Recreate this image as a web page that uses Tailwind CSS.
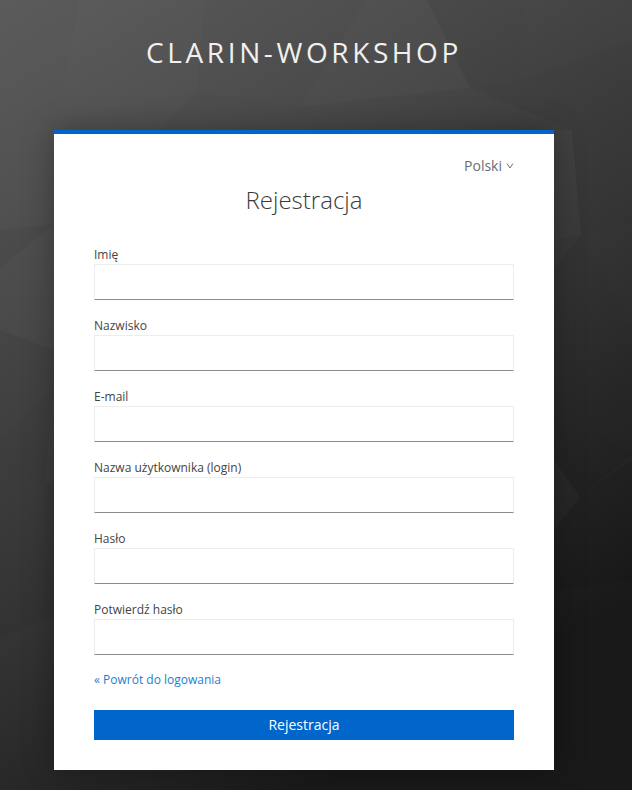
<!DOCTYPE html>
<html lang="pl">
<head>
  <meta charset="UTF-8">
  <meta name="viewport" content="width=device-width, initial-scale=1.0">
  <script src="https://cdn.jsdelivr.net/npm/@tailwindcss/browser@4"></script>
  <title>Rejestracja</title>
</head>
<body class="bg-[#2b2b2b] font-['Open_Sans',sans-serif]">
  <div class="relative w-[632px] h-[790px] overflow-hidden">
    <!-- polygon background -->
    <svg class="absolute inset-0" width="632" height="790" viewBox="0 0 632 790">
      <defs>
        <linearGradient id="bg" x1="0" y1="0" x2="0.5" y2="1">
          <stop offset="0" stop-color="#5a5a5a"/>
          <stop offset="0.3" stop-color="#4a4a4a"/>
          <stop offset="0.65" stop-color="#343434"/>
          <stop offset="1" stop-color="#191919"/>
        </linearGradient>
      </defs>
      <rect width="632" height="790" fill="url(#bg)"/>
      <polygon points="0,0 79,0 57,120 0,130" fill="#fff" fill-opacity="0.01"/>
      <polygon points="79,0 205,0 197,92 57,120" fill="#fff" fill-opacity="0.02"/>
      <polygon points="0,130 57,120 197,92 160,130 54,224 0,230" fill="#fff" fill-opacity="0.015"/>
      <polygon points="205,0 365,0 300,107 197,92" fill="#fff" fill-opacity="0.008"/>
      <polygon points="365,0 427,0 470,88 300,107" fill="#fff" fill-opacity="0.018"/>
      <polygon points="427,0 523,0 523,80 470,88" fill="#000" fill-opacity="0.02"/>
      <polygon points="523,0 632,0 632,40 523,80" fill="#000" fill-opacity="0.01"/>
      <polygon points="523,80 632,40 632,224 581,235 572,130 470,88" fill="#000" fill-opacity="0.04"/>
      <polygon points="554,130 572,130 581,235 554,240" fill="#fff" fill-opacity="0.02"/>
      <polygon points="581,235 632,224 632,328" fill="#000" fill-opacity="0.03"/>
      <polygon points="554,268 581,235 632,328 554,343" fill="#000" fill-opacity="0.05"/>
      <polygon points="554,343 632,328 632,455 554,404" fill="#000" fill-opacity="0.05"/>
      <polygon points="554,404 632,455 580,497 554,460" fill="#000" fill-opacity="0.06"/>
      <polygon points="554,460 580,497 554,530" fill="#fff" fill-opacity="0.015"/>
      <polygon points="554,530 580,497 632,460 632,580 554,590" fill="#000" fill-opacity="0.06"/>
      <polygon points="0,230 54,224 0,268" fill="#000" fill-opacity="0.015"/>
      <polygon points="0,268 54,224 54,350 0,330" fill="#fff" fill-opacity="0.01"/>
      <polygon points="0,330 54,350 54,385 0,440" fill="#000" fill-opacity="0.02"/>
      <polygon points="0,440 54,385 45,483 0,470" fill="#000" fill-opacity="0.04"/>
      <polygon points="0,470 45,483 0,525" fill="#000" fill-opacity="0.03"/>
      <polygon points="0,525 45,483 42,620 0,640" fill="#000" fill-opacity="0.02"/>
      <polygon points="45,483 54,482 54,618 42,620" fill="#000" fill-opacity="0.04"/>
    </svg>

    <div class="relative w-[608px] flex flex-col items-center">
      <h1 class="h-[130px] pt-[33px] text-[28px] leading-[38px] tracking-[3.6px] text-[#f0f0f0]">CLARIN-WORKSHOP</h1>

      <div class="w-[500px] h-[640px] bg-white border-t-4 border-[#0066cc] px-10 pt-[22px] shadow-[0_0_30px_rgba(0,0,0,0.3)]">
        <div class="flex justify-end items-center gap-1 h-5 text-sm text-[#6a6e73]">
          <span>Polski</span>
          <svg width="8" height="6" viewBox="0 0 8 6" fill="none" stroke="#6a6e73" stroke-width="1"><path d="M1 0.5 L4 5 L7 0.5"/></svg>
        </div>
        <h2 class="mt-[6px] mb-[28px] text-center text-2xl leading-[36px] font-light text-[#3a3a3a]">Rejestracja</h2>

        <form class="flex flex-col gap-[17px]">
          <div>
            <label class="block h-[18px] text-xs leading-[18px] text-[#444]">Imię</label>
            <input type="text" class="block w-full h-9 border border-[#ededed] border-b-[#8a8d90] bg-white">
          </div>
          <div>
            <label class="block h-[18px] text-xs leading-[18px] text-[#444]">Nazwisko</label>
            <input type="text" class="block w-full h-9 border border-[#ededed] border-b-[#8a8d90] bg-white">
          </div>
          <div>
            <label class="block h-[18px] text-xs leading-[18px] text-[#444]">E-mail</label>
            <input type="text" class="block w-full h-9 border border-[#ededed] border-b-[#8a8d90] bg-white">
          </div>
          <div>
            <label class="block h-[18px] text-xs leading-[18px] text-[#444]">Nazwa użytkownika (login)</label>
            <input type="text" class="block w-full h-9 border border-[#ededed] border-b-[#8a8d90] bg-white">
          </div>
          <div>
            <label class="block h-[18px] text-xs leading-[18px] text-[#444]">Hasło</label>
            <input type="password" class="block w-full h-9 border border-[#ededed] border-b-[#8a8d90] bg-white">
          </div>
          <div>
            <label class="block h-[18px] text-xs leading-[18px] text-[#444]">Potwierdź hasło</label>
            <input type="password" class="block w-full h-9 border border-[#ededed] border-b-[#8a8d90] bg-white">
          </div>
        </form>

        <a href="#" class="block mt-[16px] text-xs leading-[18px] text-[#1a7fd0]">« Powrót do logowania</a>
        <button type="button" class="block w-full h-[30px] mt-[21px] bg-[#0066cc] text-sm text-white">Rejestracja</button>
      </div>
    </div>
  </div>
</body>
</html>
